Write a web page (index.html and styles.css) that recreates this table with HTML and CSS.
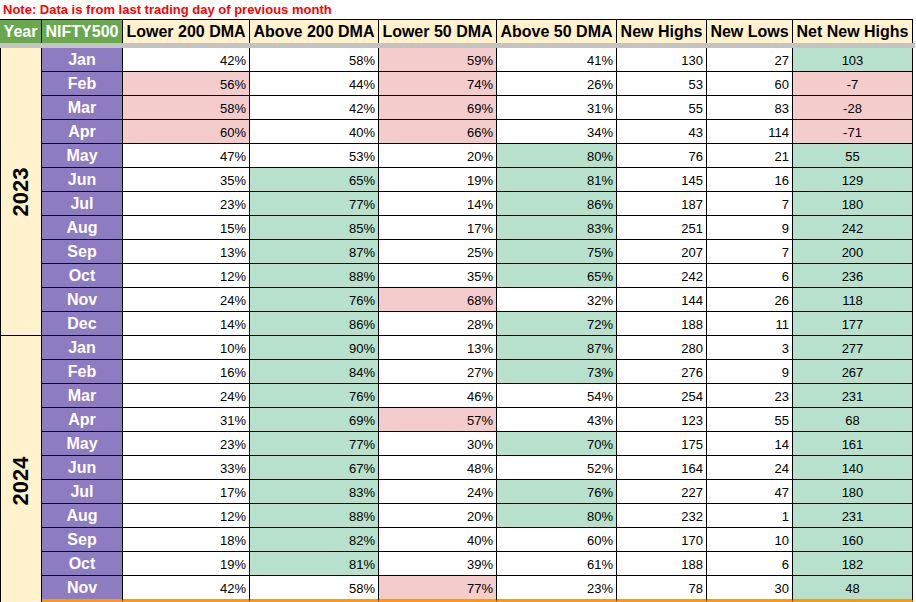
FILE: index.html
```html
<!DOCTYPE html>
<html>
<head>
<meta charset="utf-8">
<link rel="stylesheet" href="styles.css">
</head>
<body>
<div class="note">Note: Data is from last trading day of previous month</div>
<div class="grid head">
  <div class="h green">Year</div>
  <div class="h green">NIFTY500</div>
  <div class="h">Lower 200 DMA</div>
  <div class="h">Above 200 DMA</div>
  <div class="h">Lower 50 DMA</div>
  <div class="h">Above 50 DMA</div>
  <div class="h">New Highs</div>
  <div class="h">New Lows</div>
  <div class="h">Net New Highs</div>
</div>
<div class="sep"></div>
<div class="grid body" id="body">
  <div class="year y2023"><span>2023</span></div>
  <div class="year y2024"><span>2024</span></div>
</div>
<script src="app.js"></script>
</body>
</html>
```
FILE: styles.css
```css
html, body {
  margin: 0;
  padding: 0;
  background: #ffffff;
  overflow: hidden;
}
body {
  width: 916px;
  height: 602px;
  font-family: "Liberation Sans", Arial, sans-serif;
  color: #000;
}
.note {
  height: 19px;
  line-height: 19px;
  padding-left: 3px;
  font-size: 13px;
  font-weight: bold;
  color: #ff0000;
}
.grid {
  display: grid;
  grid-template-columns: 42px 81px 127px 129px 118px 120px 90px 86px 120px;
  width: 913px;
}
.head {
  grid-template-rows: 24px;
}
.h {
  box-sizing: border-box;
  border-top: 1px solid #000;
  border-right: 1px solid #000;
  background: #fff2cc;
  font-size: 16px;
  font-weight: bold;
  display: flex;
  align-items: center;
  justify-content: center;
  white-space: nowrap;
  padding-top: 1px;
}
.h.green {
  background: #6aa84f;
  color: #fff;
}
.sep {
  width: 915px;
  height: 5px;
  background: #c3c3c3;
}
.body {
  grid-template-rows: repeat(22, 24px) 26px;
}
.c {
  box-sizing: border-box;
  border-right: 1px solid #000;
  border-bottom: 1px solid #000;
  font-size: 13px;
  display: flex;
  align-items: center;
  justify-content: flex-end;
  padding-right: 3px;
  padding-top: 2px;
  background: #fff;
  white-space: nowrap;
}
.c.m {
  background: #8e7cc3;
  color: #fff;
  font-size: 16px;
  font-weight: bold;
  justify-content: center;
  padding-right: 0;
  padding-top: 1px;
}
.c.ctr {
  justify-content: center;
  padding-right: 0;
}
.c.pink { background: #f4cccc; }
.c.grn { background: #b7e1cd; }
.c.last {
  border-bottom: 3px solid #ff9900;
  padding-top: 1px;
}
.year {
  box-sizing: border-box;
  grid-column: 1;
  background: #fff2cc;
  border-left: 1px solid #000;
  border-right: 1px solid #000;
  display: flex;
  align-items: center;
  justify-content: center;
}
.y2023 {
  grid-row: 1 / span 12;
  border-bottom: 1px solid #000;
}
.y2024 {
  grid-row: 13 / span 11;
  padding-top: 24px;
}
.year span {
  transform: rotate(-90deg);
  font-size: 22px;
  font-weight: bold;
  white-space: nowrap;
  display: block;
}
```
FILE: app.js
```js
var rows = [
  ["Jan","42%","58%","59%","41%","130","27","103","---p---g"],
  ["Feb","56%","44%","74%","26%","53","60","-7","-p-p---p"],
  ["Mar","58%","42%","69%","31%","55","83","-28","-p-p---p"],
  ["Apr","60%","40%","66%","34%","43","114","-71","-p-p---p"],
  ["May","47%","53%","20%","80%","76","21","55","----g--g"],
  ["Jun","35%","65%","19%","81%","145","16","129","--g-g--g"],
  ["Jul","23%","77%","14%","86%","187","7","180","--g-g--g"],
  ["Aug","15%","85%","17%","83%","251","9","242","--g-g--g"],
  ["Sep","13%","87%","25%","75%","207","7","200","--g-g--g"],
  ["Oct","12%","88%","35%","65%","242","6","236","--g-g--g"],
  ["Nov","24%","76%","68%","32%","144","26","118","--gp---g"],
  ["Dec","14%","86%","28%","72%","188","11","177","--g-g--g"],
  ["Jan","10%","90%","13%","87%","280","3","277","--g-g--g"],
  ["Feb","16%","84%","27%","73%","276","9","267","--g-g--g"],
  ["Mar","24%","76%","46%","54%","254","23","231","--g----g"],
  ["Apr","31%","69%","57%","43%","123","55","68","--gp---g"],
  ["May","23%","77%","30%","70%","175","14","161","--g-g--g"],
  ["Jun","33%","67%","48%","52%","164","24","140","--g----g"],
  ["Jul","17%","83%","24%","76%","227","47","180","--g-g--g"],
  ["Aug","12%","88%","20%","80%","232","1","231","--g-g--g"],
  ["Sep","18%","82%","40%","60%","170","10","160","--g----g"],
  ["Oct","19%","81%","39%","61%","188","6","182","--g----g"],
  ["Nov","42%","58%","77%","23%","78","30","48","---p---g"]
];
var body = document.getElementById("body");
rows.forEach(function (r, ri) {
  var flags = r[8];
  for (var i = 0; i < 8; i++) {
    var d = document.createElement("div");
    var cls = "c";
    if (i === 0) cls += " m";
    if (i === 7) cls += " ctr";
    var f = flags.charAt(i);
    if (f === "p") cls += " pink";
    if (f === "g") cls += " grn";
    if (ri === rows.length - 1) cls += " last";
    d.className = cls;
    d.textContent = r[i];
    body.appendChild(d);
  }
});
```
